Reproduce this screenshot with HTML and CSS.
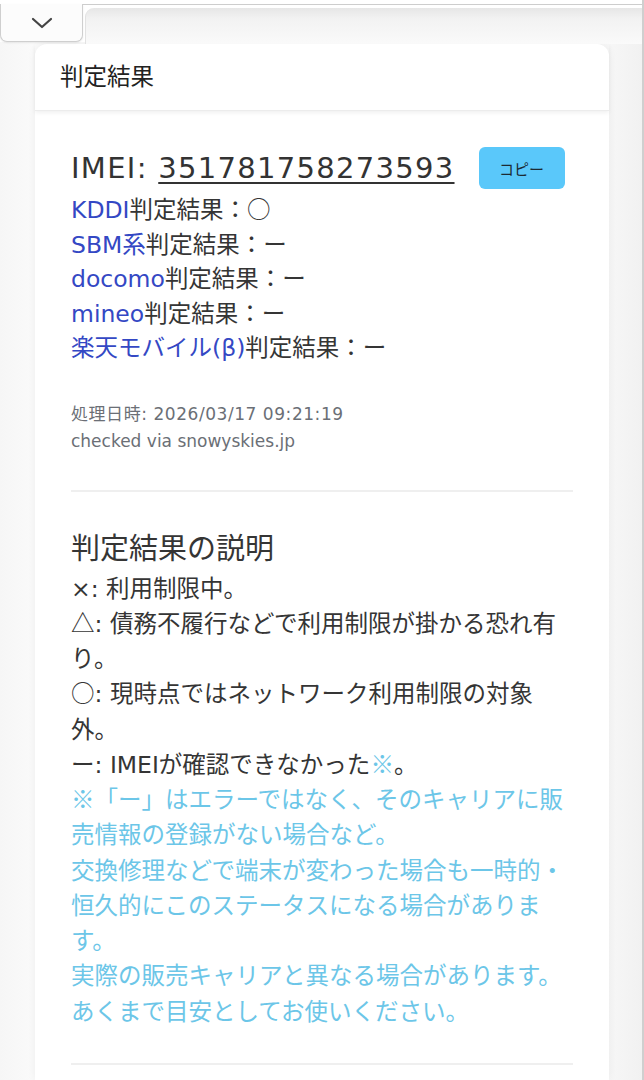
FILE: index.html
```html
<!DOCTYPE html>
<html lang="ja">
<head>
<meta charset="utf-8">
<title>判定結果</title>
<link rel="stylesheet" href="styles.css">
</head>
<body>
<div class="page">
  <div class="topbar">
    <div class="tab">
      <svg class="chev" width="22" height="12" viewBox="0 0 22 12"><path d="M2 2 L11 10 L20 2" fill="none" stroke="#444" stroke-width="2.2" stroke-linecap="round" stroke-linejoin="round"/></svg>
    </div>
    <div class="shelf"></div>
  </div>
  <main class="card">
    <div class="card-header">判定結果</div>
    <div class="card-body">
      <div class="imei-row">
        <span class="imei">IMEI: <span class="imei-num">351781758273593</span></span>
        <button class="copy">コピー</button>
      </div>
      <div class="carriers">
        <div><span class="link">KDDI</span>判定結果：<span class="sym">○</span></div>
        <div><span class="link">SBM系</span>判定結果：ー</div>
        <div><span class="link">docomo</span>判定結果：ー</div>
        <div><span class="link">mineo</span>判定結果：ー</div>
        <div><span class="link">楽天モバイル(β)</span>判定結果：ー</div>
      </div>
      <div class="meta">
        <div class="date">処理日時: 2026/03/17 09:21:19</div>
        <div>checked via snowyskies.jp</div>
      </div>
      <hr class="divider">
      <h2 class="section-title">判定結果の説明</h2>
      <div class="explain">
        <div>×: 利用制限中。</div>
        <div><span class="sym">△</span>: 債務不履行などで利用制限が掛かる恐れ有り。</div>
        <div><span class="sym">○</span>: 現時点ではネットワーク利用制限の対象外。</div>
        <div>ー: IMEIが確認できなかった<span class="note sym">※</span>。</div>
        <div class="note"><span class="sym">※</span>「ー」はエラーではなく、そのキャリアに販売情報の登録がない場合など。</div>
        <div class="note">交換修理などで端末が変わった場合も一時的・恒久的にこのステータスになる場合があります。</div>
        <div class="note">実際の販売キャリアと異なる場合があります。</div>
        <div class="note">あくまで目安としてお使いください。</div>
      </div>
      <hr class="divider">
    </div>
  </main>
</div>
</body>
</html>
```

FILE: styles.css
```css
html, body {
  margin: 0;
  padding: 0;
  height: 1080px;
  overflow: hidden;
}
body {
  font-family: "DejaVu Sans", "Noto Sans CJK JP", sans-serif;
  color: #353535;
  background: #fff;
}
.page {
  height: 1080px;
  border-right: 2px solid #cfcfcf;
  background: linear-gradient(to right, #f6f6f6 0, #fafafa 5%, #fafafa 92%, #f1f1f1 100%);
  display: flex;
  flex-direction: column;
}
.topbar {
  display: flex;
  align-items: flex-start;
  height: 42px;
  padding-top: 3px;
  box-sizing: border-box;
  border-top: 1px solid transparent;
  background: #fff;
  position: relative;
}
.topbar::before {
  content: "";
  position: absolute;
  left: 0;
  right: 0;
  top: 3px;
  height: 1px;
  background: #cdcdcd;
}
.tab {
  width: 83px;
  height: 38px;
  box-sizing: border-box;
  background: #fcfcfc;
  border: 1px solid #cfcfcf;
  border-top: none;
  border-radius: 0 0 7px 7px;
  display: flex;
  justify-content: center;
  align-items: flex-start;
  padding-top: 13px;
  position: relative;
  z-index: 1;
  box-shadow: 0 1px 2px rgba(0,0,0,0.08);
}
.shelf {
  flex: 1;
  height: 36px;
  margin-top: 4px;
  margin-left: 2px;
  border-top-left-radius: 9px;
  border-left: 1px solid #e2e2e2;
  background: linear-gradient(to bottom, #e6e6e6 0, #f2f2f2 30%, #fafafa 100%);
}
.card {
  margin: 2px 33px 0 35px;
  background: #fff;
  border-radius: 12px 12px 0 0;
  box-shadow: 0 0 8px rgba(0,0,0,0.06);
  flex: 1;
}
.card-header {
  height: 67px;
  box-sizing: border-box;
  padding: 0 25px 4px 25px;
  display: flex;
  align-items: center;
  font-size: 23.5px;
  color: #222;
  border-bottom: 1px solid #ececec;
  box-shadow: 0 2px 4px rgba(0,0,0,0.06);
  position: relative;
}
.card-body {
  padding: 36px 36px 0 36px;
}
.imei-row {
  display: flex;
  align-items: center;
  height: 42px;
}
.imei {
  font-size: 29px;
  letter-spacing: 1.3px;
  color: #333;
  margin-right: 24px;
  white-space: nowrap;
}
.imei-num {
  text-decoration: underline;
  text-decoration-thickness: 2px;
  text-underline-offset: 4px;
}
.copy {
  width: 86px;
  height: 42px;
  border: none;
  border-radius: 6px;
  background: #5ac8fa;
  color: #1c2a33;
  font-family: "Noto Sans CJK JP", sans-serif;
  font-size: 15px;
  padding: 0;
}
.carriers {
  margin-top: 4px;
  font-size: 23.5px;
  line-height: 34.5px;
}
.link {
  color: #3448c4;
}
.sym {
  font-family: "Noto Sans CJK JP", sans-serif;
  line-height: 0;
}
.meta {
  margin-top: 35px;
  font-size: 17px;
  line-height: 27px;
  color: #6b6f76;
}
.date {
  letter-spacing: 0.55px;
}
.divider {
  border: none;
  height: 2px;
  background: #efefef;
  margin: 35px 0 0 0;
}
.section-title {
  margin: 39px 0 0 0;
  font-weight: normal;
  font-size: 29px;
  line-height: 36px;
}
.explain {
  margin-top: 5px;
  font-size: 23.5px;
  line-height: 35.25px;
}
.note {
  color: #6cc6e8;
}
.explain + .divider {
  margin-top: 33px;
}
```
